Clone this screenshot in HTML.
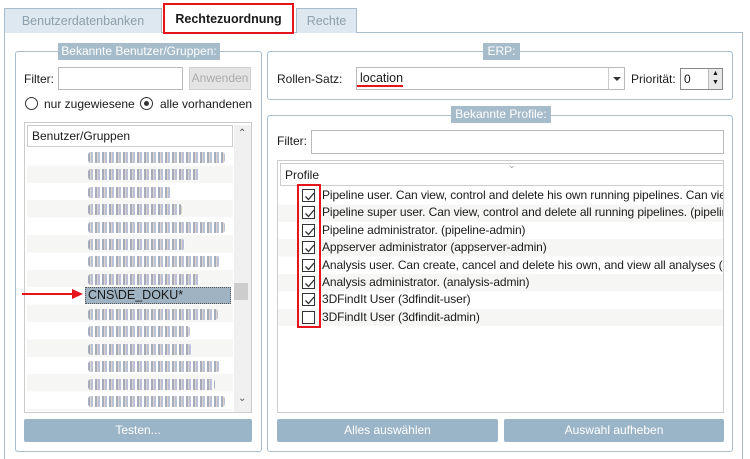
<!DOCTYPE html>
<html><head><meta charset="utf-8"><style>
*{box-sizing:border-box}
body{margin:0;width:750px;height:459px;background:#fff;font-family:"Liberation Sans",sans-serif;font-size:12px;color:#1a1a1a;position:relative;overflow:hidden}
.a{position:absolute}
.tab{position:absolute;border:1px solid #a9bccb;border-bottom:none;background:#dde8f0;color:#8ea0ad;text-align:center;font-size:12.5px}
.grp{position:absolute;border:1px solid #a9bccb;border-radius:3px}
.leg{position:absolute;background:#a6bccb;color:#fff;text-align:center;font-size:12px;height:17px;line-height:17px}
.inp{position:absolute;border:1px solid #b9b9b9;background:#fff}
.btn{position:absolute;background:#9bb5c8;border-radius:2px;color:#fff;text-align:center;line-height:23px;height:23px;font-size:12px}
.blur{position:absolute;left:88px;height:11px;border-radius:3px;background:repeating-linear-gradient(90deg,#8f98ab 0 2px,#d8c9c0 2px 3px,#aab3d0 3px 5px,#fff 5px 7px);opacity:.8;filter:blur(.3px)}
.cb{position:absolute;left:302px;width:13px;height:13px;border:1px solid #333;background:#fff}
.cb svg{position:absolute;left:1px;top:1px}
.pt{position:absolute;left:322px;white-space:nowrap;width:401px;overflow:hidden;font-size:12px;letter-spacing:-0.1px}
</style></head><body>
<div class="a" style="left:4px;top:32px;width:739px;height:427px;border:1px solid #a9bccb;border-bottom:none"></div>
<div class="tab" style="left:4px;top:8px;width:158px;height:25px;line-height:24px">Benutzerdatenbanken</div>
<div class="tab" style="left:296px;top:8px;width:61px;height:25px;line-height:24px">Rechte</div>
<div class="a" style="left:163px;top:3px;width:131px;height:31px;background:#fff;border:2px solid #e8141c;font-weight:bold;text-align:center;line-height:28px;font-size:12.5px">Rechtezuordnung</div>

<div class="grp" style="left:15px;top:51px;width:247px;height:401px"></div>
<div class="leg" style="left:58px;top:43px;width:162px">Bekannte Benutzer/Gruppen:</div>
<div class="a" style="left:24px;top:72px">Filter:</div>
<div class="inp" style="left:58px;top:67px;width:125px;height:23px"></div>
<div class="a" style="left:189px;top:67px;width:62px;height:23px;background:#e4e4e4;border:1px solid #cfcfcf;color:#aaa;text-align:center;line-height:21px">Anwenden</div>
<div class="a" style="left:25px;top:97px;width:13px;height:13px;border:1px solid #333;border-radius:50%"></div>
<div class="a" style="left:44px;top:97px">nur zugewiesene</div>
<div class="a" style="left:140px;top:97px;width:13px;height:13px;border:1px solid #333;border-radius:50%"><div class="a" style="left:3px;top:3px;width:5px;height:5px;background:#333;border-radius:50%"></div></div>
<div class="a" style="left:160px;top:97px">alle vorhandenen</div>
<div class="a" style="left:24px;top:122px;width:228px;height:291px;border:1px solid #ccc;background:#fff"></div>
<div class="a" style="left:27px;top:125px;width:206px;height:22px;border:1px solid #ccc;line-height:20px;padding-left:4px">Benutzer/Gruppen</div>
<div class="a" style="left:234px;top:125px;width:17px;height:287px;background:#f0f0f0"></div>
<div class="a" style="left:238px;top:128px;font-size:10px;color:#555">⌃</div>
<div class="a" style="left:238px;top:393px;font-size:10px;color:#555">⌄</div>
<div class="a" style="left:234px;top:283px;width:14px;height:17px;background:#cdcdcd"></div>
<div class="a" style="left:27px;top:148px;width:206px;height:263px;background:repeating-linear-gradient(180deg,#fff 0 17.4px,#f6f7f4 17.4px 34.8px)"></div>
<div class="blur" style="top:152px;width:137px"></div>
<div class="blur" style="top:169px;width:112px"></div>
<div class="blur" style="top:187px;width:84px"></div>
<div class="blur" style="top:204px;width:94px"></div>
<div class="blur" style="top:222px;width:137px"></div>
<div class="blur" style="top:239px;width:97px"></div>
<div class="blur" style="top:256px;width:132px"></div>
<div class="blur" style="top:274px;width:112px"></div>
<div class="a" style="left:85px;top:287px;width:146px;height:17px;background:#9fb3c2;border:1px dotted #555;line-height:15px;padding-left:2px;font-size:12.5px">CNS\DE_DOKU*</div>
<div class="blur" style="top:309px;width:130px"></div>
<div class="blur" style="top:326px;width:102px"></div>
<div class="blur" style="top:344px;width:104px"></div>
<div class="blur" style="top:361px;width:132px"></div>
<div class="blur" style="top:379px;width:127px"></div>
<div class="blur" style="top:396px;width:137px"></div>
<svg class="a" style="left:20px;top:288px" width="64" height="12"><line x1="2" y1="6" x2="55" y2="6" stroke="#e8141c" stroke-width="2"/><polygon points="52,1 63,6 52,11" fill="#e8141c"/></svg>
<div class="btn" style="left:24px;top:419px;width:228px">Testen...</div>

<div class="grp" style="left:267px;top:51px;width:466px;height:49px"></div>
<div class="leg" style="left:483px;top:43px;width:37px">ERP:</div>
<div class="a" style="left:277px;top:72px">Rollen-Satz:</div>
<div class="inp" style="left:356px;top:67px;width:269px;height:23px;padding-left:3px;line-height:21px;font-size:12.5px">location</div>
<div class="a" style="left:608px;top:68px;width:16px;height:21px;border-left:1px solid #ccc"><div class="a" style="left:4px;top:9px;border:4px solid transparent;border-top:4px solid #333"></div></div>
<div class="a" style="left:357px;top:85px;width:46px;height:2px;background:#e8141c"></div>
<div class="a" style="left:631px;top:72px">Priorität:</div>
<div class="inp" style="left:680px;top:68px;width:43px;height:22px;border-color:#888;padding-left:3px;line-height:20px">0</div>
<div class="a" style="left:708px;top:69px;width:14px;height:20px;background:#e8e8e8;border-left:1px solid #bbb;font-size:7px;line-height:9px;text-align:center">▲<br>▼</div>

<div class="grp" style="left:267px;top:115px;width:466px;height:337px"></div>
<div class="leg" style="left:451px;top:106px;width:100px">Bekannte Profile:</div>
<div class="a" style="left:277px;top:134px">Filter:</div>
<div class="inp" style="left:311px;top:130px;width:413px;height:24px"></div>
<div class="a" style="left:277px;top:160px;width:447px;height:253px;border:1px solid #ccc"></div>
<div class="a" style="left:280px;top:163px;width:444px;height:23px;border:1px solid #ccc;line-height:22px;padding-left:4px">Profile</div>
<div class="a" style="left:508px;top:160px;font-size:9px;color:#999">⌄</div>
<div class="a" style="left:278px;top:187px;width:445px;height:140px;background:repeating-linear-gradient(180deg,#fff 0 17.4px,#f6f7f4 17.4px 34.8px)"></div>
<div class="pt" style="top:188px">Pipeline user. Can view, control and delete his own running pipelines. Can view all pipelines</div>
<div class="pt" style="top:205px">Pipeline super user. Can view, control and delete all running pipelines. (pipeline-super)</div>
<div class="pt" style="top:223px">Pipeline administrator. (pipeline-admin)</div>
<div class="pt" style="top:240px">Appserver administrator (appserver-admin)</div>
<div class="pt" style="top:258px">Analysis user. Can create, cancel and delete his own, and view all analyses (analysis-user)</div>
<div class="pt" style="top:275px">Analysis administrator. (analysis-admin)</div>
<div class="pt" style="top:292px">3DFindIt User (3dfindit-user)</div>
<div class="pt" style="top:310px">3DFindIt User (3dfindit-admin)</div>
<div class="cb" style="top:189px"><svg width="11" height="11"><path d="M1.5 5.5 L4.5 8.5 L10 2" fill="none" stroke="#333" stroke-width="1.3"/></svg></div>
<div class="cb" style="top:206px"><svg width="11" height="11"><path d="M1.5 5.5 L4.5 8.5 L10 2" fill="none" stroke="#333" stroke-width="1.3"/></svg></div>
<div class="cb" style="top:224px"><svg width="11" height="11"><path d="M1.5 5.5 L4.5 8.5 L10 2" fill="none" stroke="#333" stroke-width="1.3"/></svg></div>
<div class="cb" style="top:241px"><svg width="11" height="11"><path d="M1.5 5.5 L4.5 8.5 L10 2" fill="none" stroke="#333" stroke-width="1.3"/></svg></div>
<div class="cb" style="top:259px"><svg width="11" height="11"><path d="M1.5 5.5 L4.5 8.5 L10 2" fill="none" stroke="#333" stroke-width="1.3"/></svg></div>
<div class="cb" style="top:276px"><svg width="11" height="11"><path d="M1.5 5.5 L4.5 8.5 L10 2" fill="none" stroke="#333" stroke-width="1.3"/></svg></div>
<div class="cb" style="top:293px"><svg width="11" height="11"><path d="M1.5 5.5 L4.5 8.5 L10 2" fill="none" stroke="#333" stroke-width="1.3"/></svg></div>
<div class="cb" style="top:311px"></div>
<div class="a" style="left:297px;top:184px;width:24px;height:144px;border:2px solid #e8141c"></div>
<div class="btn" style="left:277px;top:419px;width:221px">Alles auswählen</div>
<div class="btn" style="left:504px;top:419px;width:220px">Auswahl aufheben</div>
</body></html>
